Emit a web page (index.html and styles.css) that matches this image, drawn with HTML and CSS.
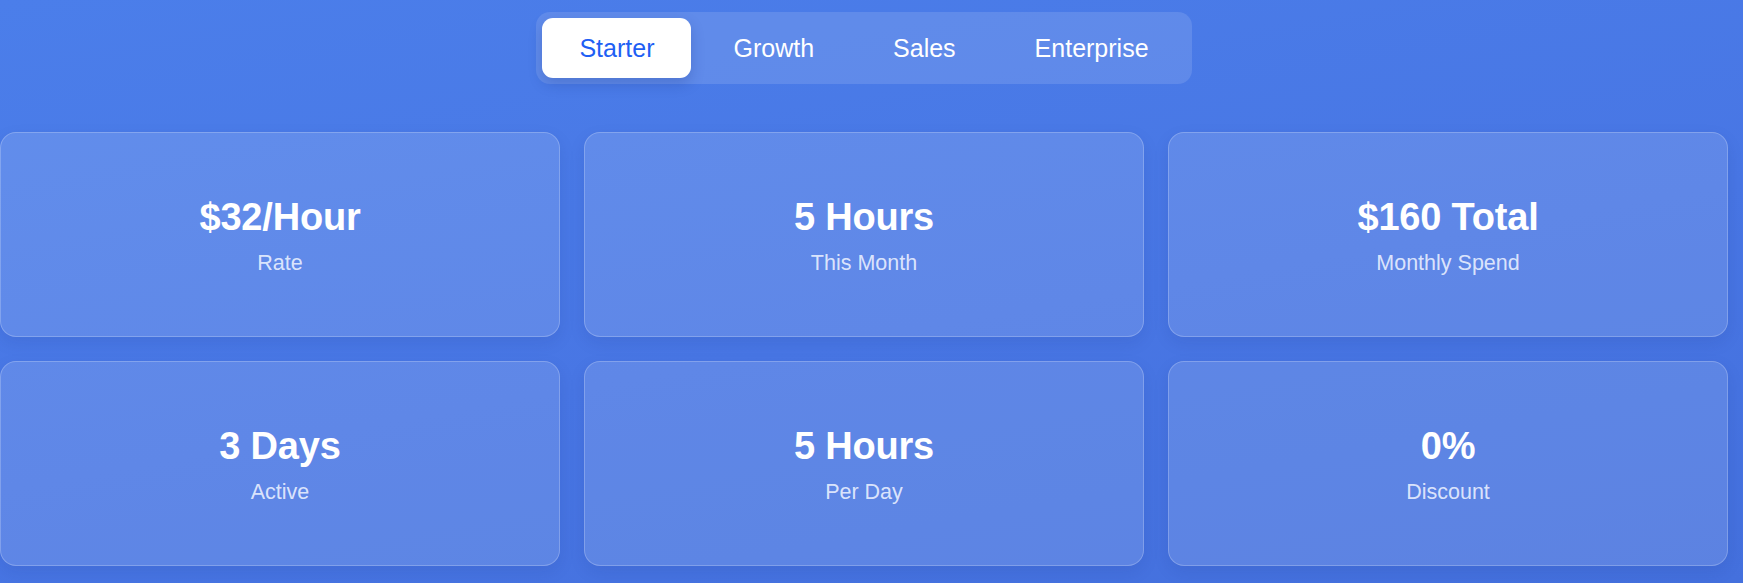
FILE: index.html
```html
<!DOCTYPE html>
<html lang="en">
<head>
<meta charset="utf-8">
<title>Pricing tiers</title>
<link rel="stylesheet" href="styles.css">
</head>
<body>
<div class="page">
  <nav class="tabs">
    <button class="tab active">Starter</button>
    <button class="tab">Growth</button>
    <button class="tab">Sales</button>
    <button class="tab">Enterprise</button>
  </nav>
  <section class="grid">
    <div class="card"><div class="value">$32/Hour</div><div class="label">Rate</div></div>
    <div class="card"><div class="value">5 Hours</div><div class="label">This Month</div></div>
    <div class="card"><div class="value">$160 Total</div><div class="label">Monthly Spend</div></div>
    <div class="card"><div class="value">3 Days</div><div class="label">Active</div></div>
    <div class="card"><div class="value">5 Hours</div><div class="label">Per Day</div></div>
    <div class="card"><div class="value">0%</div><div class="label">Discount</div></div>
  </section>
</div>
</body>
</html>
```

FILE: styles.css
```css
html, body {
  margin: 0;
  padding: 0;
  height: 100%;
}
body {
  background: linear-gradient(170deg, #4b7eea 0%, #4876e4 55%, #4470dd 100%);
  font-family: "Liberation Sans", Arial, sans-serif;
  color: #ffffff;
  overflow: hidden;
}
.page {
  width: 1728px;
  padding-top: 12px;
  display: flex;
  flex-direction: column;
  align-items: center;
}
.tabs {
  display: flex;
  gap: 5px;
  padding: 6px;
  background: rgba(255, 255, 255, 0.12);
  border-radius: 14px;
}
.tab {
  height: 60px;
  padding: 0 37px;
  border: 0;
  background: transparent;
  color: #ffffff;
  font-family: inherit;
  font-size: 25px;
  border-radius: 11px;
  cursor: pointer;
}
.tab.active {
  background: #ffffff;
  color: #1f5ff4;
  box-shadow: 0 6px 14px rgba(20, 40, 120, 0.22);
}
.grid {
  margin-top: 48px;
  width: 100%;
  display: grid;
  grid-template-columns: repeat(3, 1fr);
  column-gap: 24px;
  row-gap: 24px;
}
.card {
  box-sizing: border-box;
  height: 205px;
  border: 1px solid rgba(255, 255, 255, 0.22);
  border-radius: 16px;
  background: rgba(255, 255, 255, 0.13);
  box-shadow: 0 6px 16px rgba(20, 40, 120, 0.10);
  display: flex;
  flex-direction: column;
  align-items: center;
  justify-content: center;
  gap: 12px;
}
.value {
  font-size: 38px;
  font-weight: 700;
  line-height: 44px;
  letter-spacing: -0.2px;
}
.label {
  font-size: 21.5px;
  line-height: 24px;
  color: rgba(235, 241, 255, 0.9);
}
```
